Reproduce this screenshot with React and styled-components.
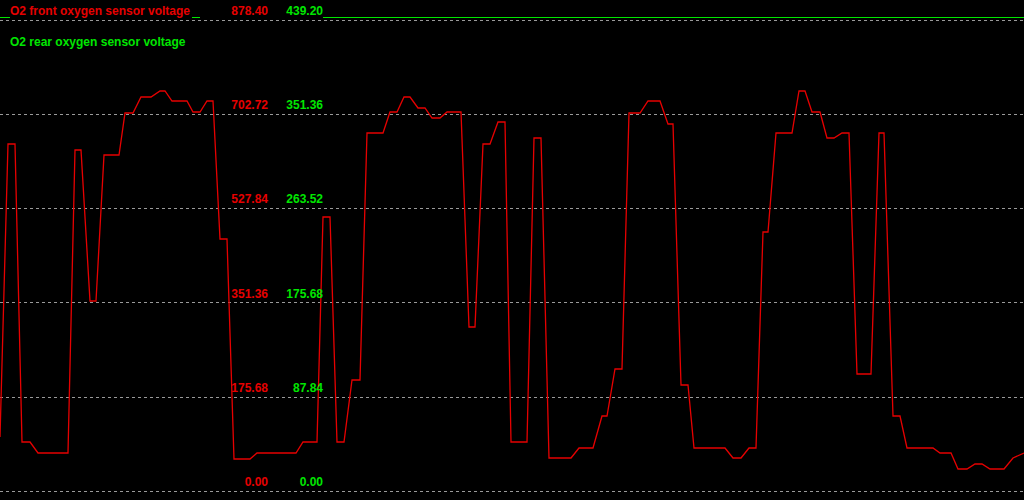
import React from "react";
import styled, { createGlobalStyle } from "styled-components";

const Global = createGlobalStyle`
  html, body { margin: 0; padding: 0; background: #000; }
`;

const Chart = styled.div`
  position: relative;
  width: 1024px;
  height: 500px;
  background: #000;
  overflow: hidden;
  font-family: "Liberation Sans", Arial, sans-serif;
  font-size: 12px;
  font-weight: bold;
`;

const Plot = styled.svg`
  position: absolute;
  left: 0;
  top: 0;
`;

const Legends = styled.div`
  position: absolute;
  left: 10px;
  top: 4px;
  display: flex;
  flex-direction: column;
  align-items: flex-start;
  gap: 17px;
`;

const Legend = styled.div`
  color: ${(p) => p.$color};
  background: #000;
  padding-right: 2px;
  line-height: 14px;
`;

const Ticks = styled.div`
  position: absolute;
  left: 200px;
  top: 4px;
  display: flex;
  flex-direction: column;
`;

const Tick = styled.div`
  display: flex;
  height: 94.2px;
  line-height: 14px;
`;

const Val = styled.span`
  width: ${(p) => p.$w}px;
  height: 14px;
  text-align: right;
  color: ${(p) => p.$color};
  background: ${(p) => (p.$bg ? "#000" : "transparent")};
`;

const RED = "#e60000";
const GREEN = "#00e600";

const pts = [[0,437],[8,144],[15,144],[22,442],[30,442],[38,453],[68,453],[75,150],[81,150],[90,301],[96,301],[104,155],[119,155],[125,113],[133,113],[141,97],[151,97],[160,91],[165,91],[172,101],[187,101],[193,112],[200,112],[207,101],[213,101],[220,239],[227,239],[234,459],[250,459],[257,453],[296,453],[303,442],[317,442],[323,217],[330,217],[337,442],[344,442],[352,380],[360,380],[367,133],[383,133],[390,112],[397,112],[404,97],[410,97],[418,108],[425,108],[432,118],[440,118],[447,112],[461,112],[469,327],[475,327],[483,144],[490,144],[498,122],[505,122],[511,442],[527,442],[534,138],[541,138],[549,458],[571,458],[579,448],[593,448],[602,416],[607,416],[615,369],[622,369],[629,113],[640,113],[648,101],[660,101],[668,124],[673,124],[681,385],[688,385],[694,448],[725,448],[733,458],[741,458],[749,448],[756,448],[763,232],[768,232],[776,133],[792,133],[799,91],[805,91],[812,112],[820,112],[827,138],[834,138],[842,133],[849,133],[857,374],[871,374],[879,133],[884,133],[893,416],[900,416],[907,448],[933,448],[940,453],[951,453],[958,469],[967,469],[975,464],[982,464],[990,469],[1004,469],[1013,458],[1024,453]];

const grid = [20, 114, 208, 302, 397, 491];
const ticks = [
  ["878.40", "439.20"],
  ["702.72", "351.36"],
  ["527.84", "263.52"],
  ["351.36", "175.68"],
  ["175.68", "87.84"],
  ["0.00", "0.00"],
];

export default function App() {
  return (
    <>
      <Global />
      <Chart>
        <Plot width="1024" height="500">
          {grid.map((y) => (
            <line key={y} x1="0" x2="1024" y1={y + 0.5} y2={y + 0.5} stroke="#9a9a9a" strokeDasharray="3 3" />
          ))}
          <line x1="0" x2="1024" y1="17.5" y2="17.5" stroke={GREEN} strokeWidth="1.2" />
          <polyline points={pts.map((p) => p.join(",")).join(" ")} fill="none" stroke={RED} strokeWidth="1.3" />
        </Plot>
        <Ticks>
          {ticks.map(([a, b], i) => (
            <Tick key={a + i}>
              <Val $w={68} $color={RED} $bg={i === 0}>{a}</Val>
              <Val $w={55} $color={GREEN} $bg={i === 0}>{b}</Val>
            </Tick>
          ))}
        </Ticks>
        <Legends>
          <Legend $color={RED}>O2 front oxygen sensor voltage</Legend>
          <Legend $color={GREEN}>O2 rear oxygen sensor voltage</Legend>
        </Legends>
      </Chart>
    </>
  );
}
